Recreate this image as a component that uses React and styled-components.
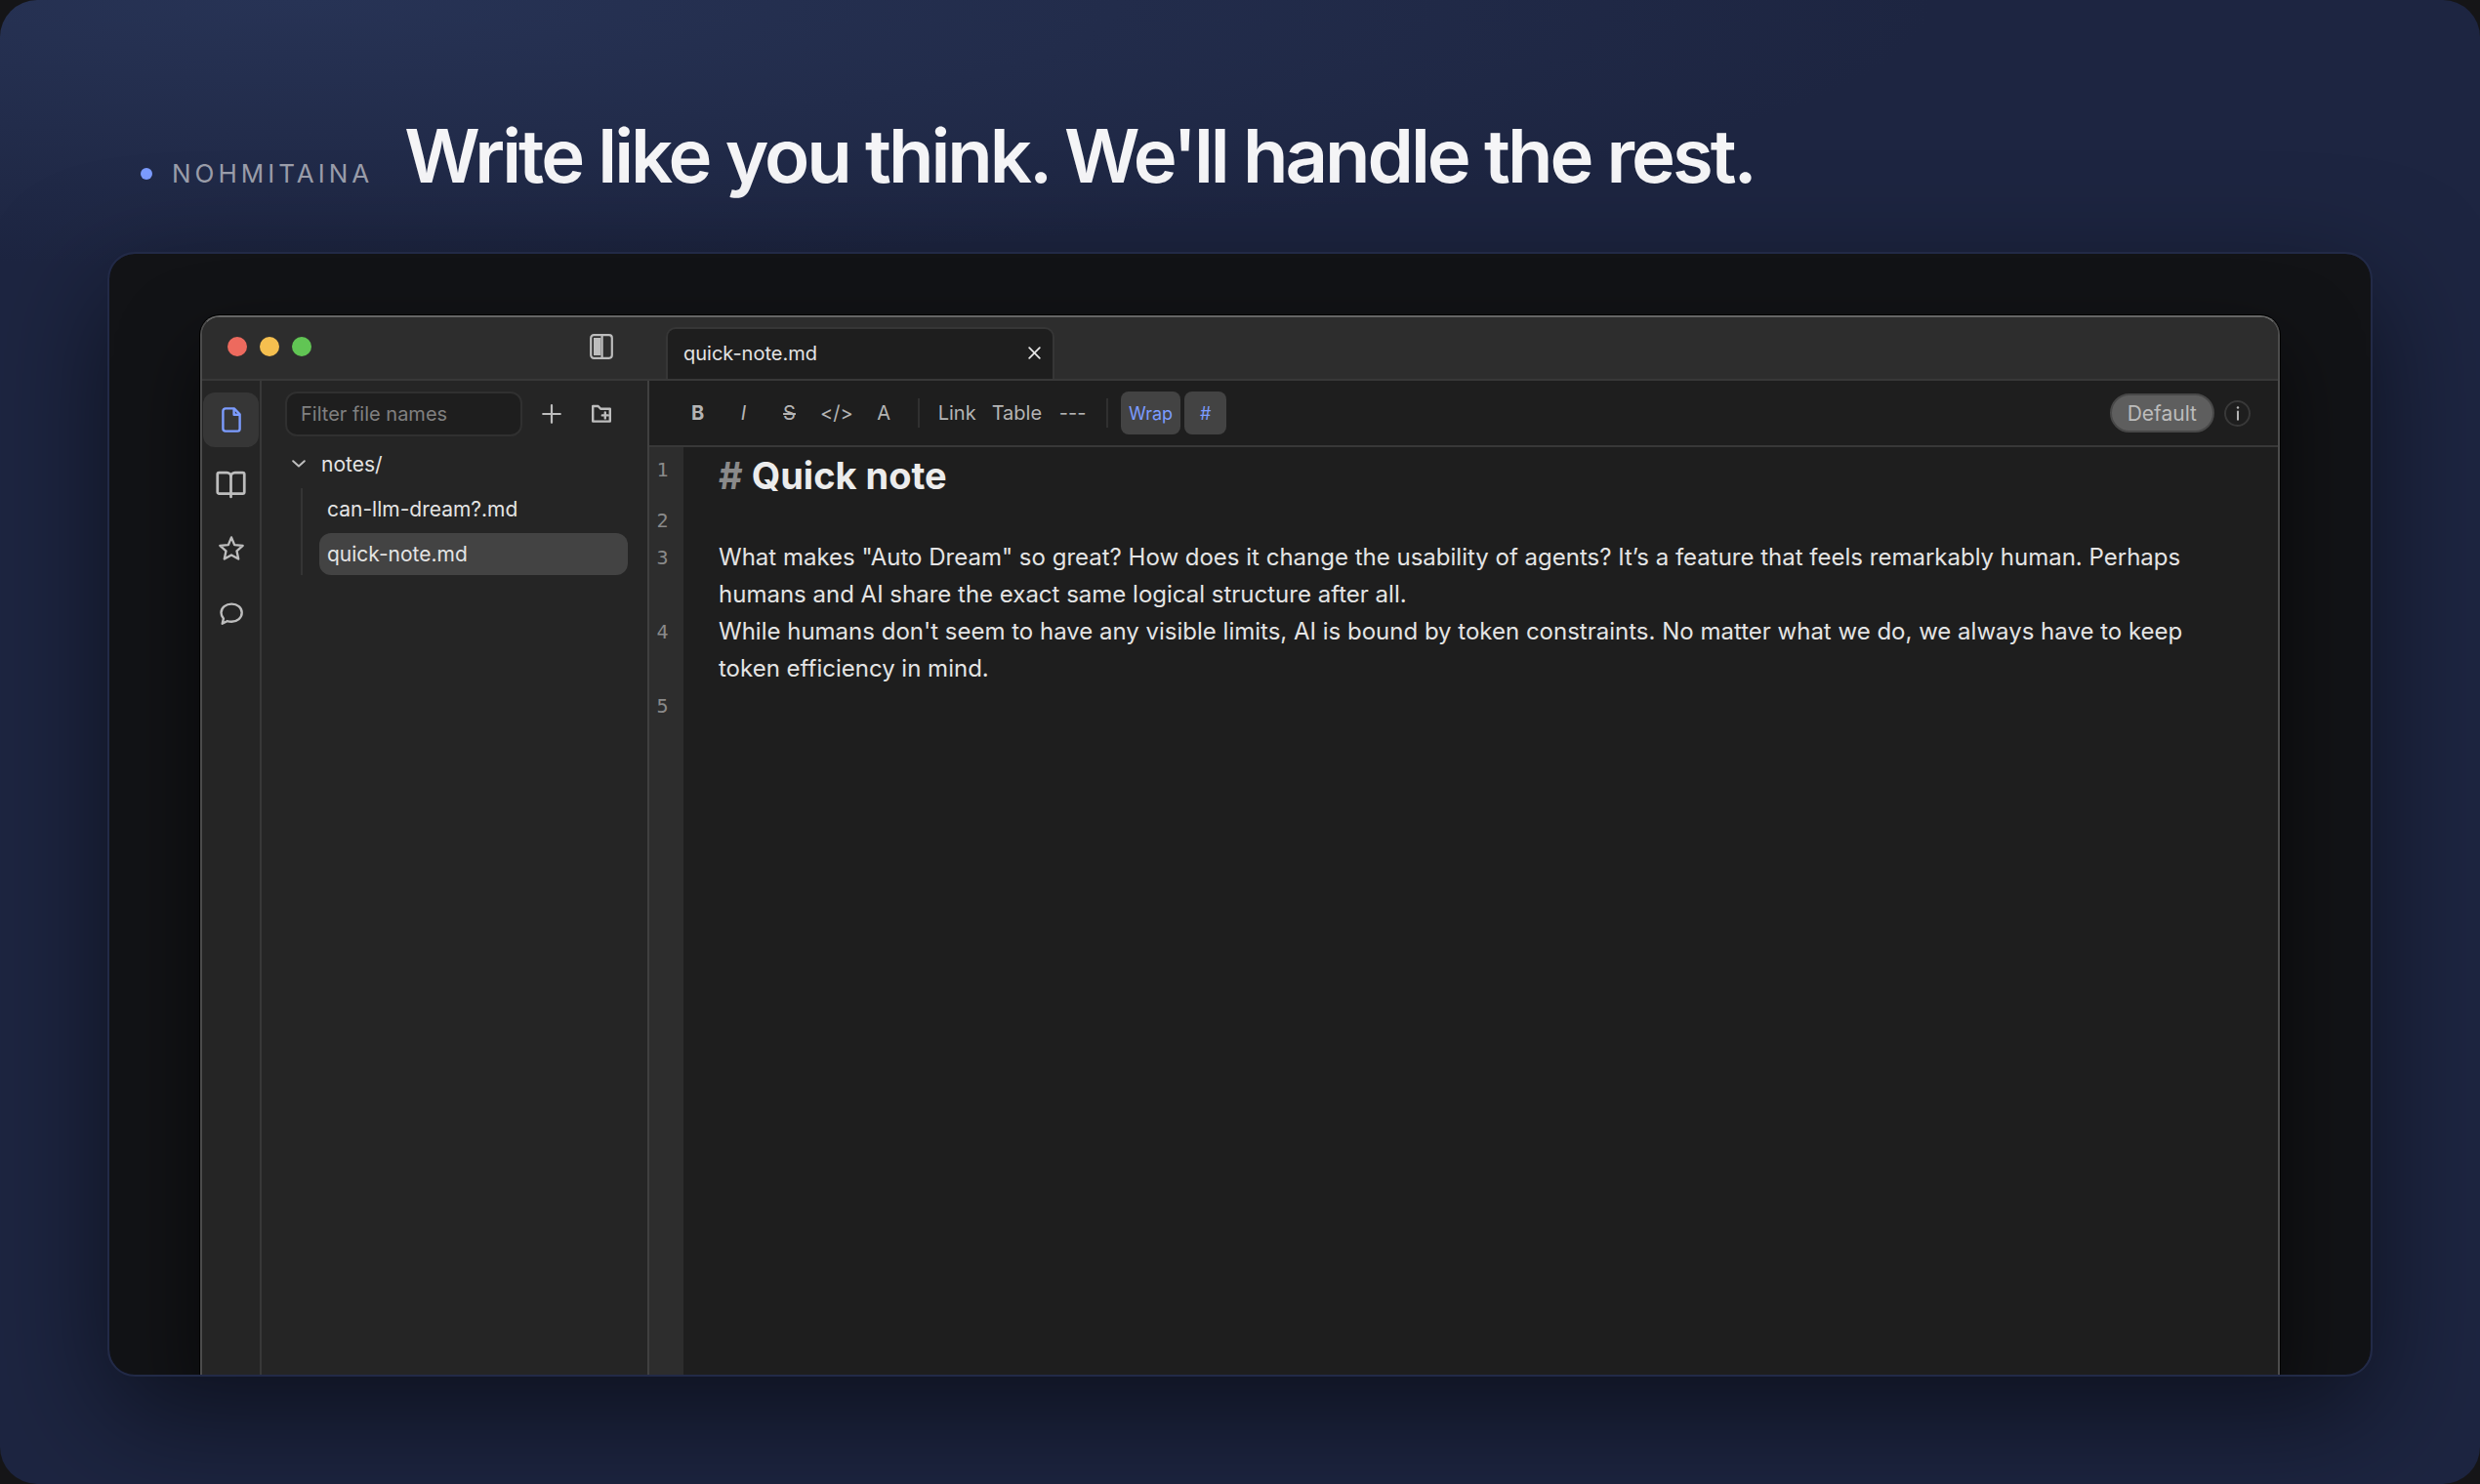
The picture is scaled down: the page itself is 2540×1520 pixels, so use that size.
import React, { useState } from "react";
import styled, { createGlobalStyle } from "styled-components";

const GlobalStyle = createGlobalStyle`
  * {
    box-sizing: border-box;
  }
  body {
    margin: 0;
    background: #151517;
    font-family: Inter, "Liberation Sans", sans-serif;
  }
  button, input {
    font-family: inherit;
    color: inherit;
  }
  h1, h2, p, ul {
    margin: 0;
    padding: 0;
  }
`;

const stroke = {
  fill: "none",
  stroke: "currentColor",
  strokeLinecap: "round",
  strokeLinejoin: "round",
};

const FileIcon = () => (
  <svg width="20" height="26" viewBox="0 0 20 26" {...stroke} strokeWidth="2.4">
    <path d="M4 1.4h8.800L18.600 7.400v14.800a2.400 2.400 0 0 1-2.400 2.400H4a2.600 2.600 0 0 1-2.600-2.600V4A2.600 2.600 0 0 1 4 1.400z" />
    <path d="M12.600 2.200v5.600h5.400" />
  </svg>
);

const BookIcon = () => (
  <svg width="33" height="33" viewBox="0 0 24 24" {...stroke} strokeWidth="2">
    <path d="M12 6.500v14.500" />
    <path d="M12 18.600H3.200a1.200 1.200 0 0 1-1.200-1.200V4.200A1.200 1.200 0 0 1 3.200 3H9a3 3 0 0 1 3 3 3 3 0 0 1 3-3h5.800A1.200 1.200 0 0 1 22 4.200v13.200a1.200 1.200 0 0 1-1.200 1.200z" />
  </svg>
);

const StarIcon = () => (
  <svg width="28" height="28" viewBox="0 0 24 24" {...stroke} strokeWidth="2">
    <path d="M12 2l2.700 6.700L22 9.270l-5.300 4.670 1.480 7.080L12 17.500l-6.180 3.520 1.480-7.080L2 9.270l7.300-.570z" />
  </svg>
);

const ChatIcon = () => (
  <svg width="26" height="26" viewBox="0 0 26 26" {...stroke} strokeWidth="2.4">
    <path d="M13.200 3.600C7.200 3.600 2.500 7.400 2.500 12.600c0 2.300.9 4.300 2.400 6L3.700 23.800l4.900-2.600c1.400.4 3 .6 4.600.6 6 0 10.500-4 10.500-9.200s-4.500-9-10.500-9z" />
  </svg>
);

const PlusIcon = () => (
  <svg width="20" height="20" viewBox="0 0 20 20" {...stroke} strokeWidth="2.2">
    <path d="M10 1.200v17.600M1.200 10h17.600" />
  </svg>
);

const FolderPlusIcon = () => (
  <svg width="22" height="20" viewBox="0 0 22 20" {...stroke} strokeWidth="2.4">
    <path d="M2.200 2h5.400l2.600 2.800h9.600v12.800H2.200z" />
    <path d="M14.800 8.400v6M11.800 11.400h6" />
  </svg>
);

const ChevronIcon = () => (
  <svg width="14" height="8" viewBox="0 0 14 8" {...stroke} strokeWidth="2">
    <path d="M1.200 1.200L7 6.600l5.800-5.400" />
  </svg>
);

const PanelIcon = () => (
  <svg width="24" height="26" viewBox="0 0 24 26" {...stroke} strokeWidth="2.2">
    <rect x="1.200" y="1.200" width="21.600" height="23.600" rx="3" />
    <path d="M12.600 2v22" />
    <rect x="4" y="4" width="7.400" height="18" fill="currentColor" stroke="none" />
  </svg>
);

const CloseIcon = () => (
  <svg width="13" height="13" viewBox="0 0 13 13" {...stroke} strokeWidth="1.8">
    <path d="M1.200 1.200l10.600 10.600M11.800 1.200L1.200 11.800" />
  </svg>
);

const InfoIcon = () => (
  <svg width="4" height="15" viewBox="0 0 4 15" {...stroke} strokeWidth="2">
    <path d="M2 5.400v8.400" />
    <path d="M2 1.400v.1" strokeWidth="2.4" />
  </svg>
);

const railItems = [
  { label: "Files", icon: <FileIcon /> },
  { label: "Library", icon: <BookIcon /> },
  { label: "Favorites", icon: <StarIcon /> },
  { label: "Chat", icon: <ChatIcon /> },
];

const files = ["can-llm-dream?.md", "quick-note.md"];

const App = () => {
  const [rail, setRail] = useState("Files");
  const [file, setFile] = useState("quick-note.md");

  return (
    <Page>
      <GlobalStyle />
      <Hero>
        <Brand>
          <Dot />
          <span>NOHMITAINA</span>
        </Brand>
        <Slogan>Write like you think. We'll handle the rest.</Slogan>
      </Hero>
      <Stage>
        <AppWindow>
          <TitleBar>
            <TitleLeft>
              <Light $color="#ed6a5e" />
              <Light $color="#f5bf4f" />
              <Light $color="#61c554" />
              <PanelButton aria-label="Toggle sidebar">
                <PanelIcon />
              </PanelButton>
            </TitleLeft>
            <Tab>
              <span>{file}</span>
              <TabClose aria-label="Close tab">
                <CloseIcon />
              </TabClose>
            </Tab>
          </TitleBar>
          <Body>
            <Rail>
              {railItems.map((item) => (
                <RailButton
                  key={item.label}
                  aria-label={item.label}
                  $active={rail === item.label}
                  onClick={() => setRail(item.label)}
                >
                  {item.icon}
                </RailButton>
              ))}
            </Rail>
            <Sidebar>
              <SearchRow>
                <FilterInput aria-label="Filter file names" placeholder="Filter file names" />
                <IconButton aria-label="New file">
                  <PlusIcon />
                </IconButton>
                <IconButton aria-label="New folder">
                  <FolderPlusIcon />
                </IconButton>
              </SearchRow>
              <FolderRow>
                <ChevronIcon />
                <FolderName>notes/</FolderName>
              </FolderRow>
              <FileList>
                {files.map((name) => (
                  <li key={name}>
                    <FileRow $active={file === name} onClick={() => setFile(name)}>
                      {name}
                    </FileRow>
                  </li>
                ))}
              </FileList>
            </Sidebar>
            <Main>
              <Toolbar>
                <Tool $weight={700}>B</Tool>
                <Tool $italic>I</Tool>
                <Tool $strike>S</Tool>
                <Tool>&lt;/&gt;</Tool>
                <Tool>A</Tool>
                <Divider />
                <Tool>Link</Tool>
                <Tool>Table</Tool>
                <Tool>---</Tool>
                <Divider />
                <ToggleTool aria-pressed="true">Wrap</ToggleTool>
                <ToggleTool aria-pressed="true">#</ToggleTool>
                <ThemeButton>Default</ThemeButton>
                <InfoButton aria-label="Info">
                  <InfoIcon />
                </InfoButton>
              </Toolbar>
              <Editor>
                <Line>
                  <LineNo>1</LineNo>
                  <NoteTitle>
                    <Mark>#</Mark> Quick note
                  </NoteTitle>
                </Line>
                <Line>
                  <LineNo>2</LineNo>
                </Line>
                <Line>
                  <LineNo>3</LineNo>
                  <Paragraph>
                    What makes "Auto Dream" so great? How does it change the usability of
                    agents? It’s a feature that feels remarkably human. Perhaps humans and
                    AI share the exact same logical structure after all.
                  </Paragraph>
                </Line>
                <Line>
                  <LineNo>4</LineNo>
                  <Paragraph>
                    While humans don't seem to have any visible limits, AI is bound by token
                    constraints. No matter what we do, we always have to keep token
                    efficiency in mind.
                  </Paragraph>
                </Line>
                <Line>
                  <LineNo>5</LineNo>
                </Line>
              </Editor>
            </Main>
          </Body>
        </AppWindow>
      </Stage>
    </Page>
  );
};
export default App;

const Page = styled.div`
  min-height: 100vh;
  display: flex;
  flex-direction: column;
  padding: 119px 110px 110px;
  border-radius: 38px;
  background: radial-gradient(ellipse 66% 18% at 12% 0%, #273355 0%, rgba(39, 51, 85, 0) 100%), #1d2541;
  overflow: hidden;
`;

const Hero = styled.header`
  display: flex;
  align-items: baseline;
  gap: 32px;
  padding: 0 34px 59px;
`;
const Brand = styled.div`
  display: flex;
  align-items: baseline;
  gap: 20px;
  font-size: 26px;
  letter-spacing: 4px;
  color: #9b9eab;
`;
const Dot = styled.span`
  width: 12px;
  height: 12px;
  align-self: center;
  border-radius: 50%;
  background: #7c9cff;
`;
const Slogan = styled.h1`
  font-size: 76px;
  line-height: 80px;
  font-weight: 600;
  letter-spacing: -3px;
  color: #f5f5f7;
`;

const Stage = styled.main`
  flex: 1;
  display: flex;
  padding: 63px 93px 0;
  border: 2px solid #222a47;
  border-radius: 28px;
  background: #121316;
  background-clip: padding-box;
  box-shadow: 0 40px 120px rgba(0, 0, 0, 0.55);
  overflow: hidden;
`;
const AppWindow = styled.div`
  flex: 1;
  display: flex;
  flex-direction: column;
  border: 2px solid #4c4c4c;
  border-top-color: #666;
  border-bottom: 0;
  border-radius: 20px 20px 0 0;
  background: #1e1e1e;
  box-shadow: 0 0 0 1px #000, 0 36px 80px rgba(0, 0, 0, 0.6);
  overflow: hidden;
`;

const TitleBar = styled.div`
  height: 65px;
  display: flex;
  align-items: flex-end;
  border-bottom: 2px solid #383838;
  background: #2d2d2d;
`;
const TitleLeft = styled.div`
  width: 475px;
  height: 60px;
  align-self: flex-start;
  display: flex;
  align-items: center;
  gap: 13px;
  padding: 0 45px 0 26px;
`;
const Light = styled.span`
  width: 20px;
  height: 20px;
  border-radius: 50%;
  background: ${(props) => props.$color};
`;
const IconButton = styled.button`
  width: 42px;
  height: 42px;
  flex: none;
  display: flex;
  align-items: center;
  justify-content: center;
  padding: 0;
  border: 0;
  background: none;
  color: #bdbdbd;
`;
const PanelButton = styled(IconButton)`
  margin-left: auto;
`;
const Tab = styled.div`
  width: 398px;
  height: 53px;
  display: flex;
  align-items: center;
  justify-content: space-between;
  padding: 0 10px 2px 16px;
  border: 2px solid #363636;
  border-bottom: 0;
  border-radius: 10px 10px 0 0;
  background: #1e1e1e;
  color: #e4e4e4;
  font-size: 20px;
`;
const TabClose = styled.button`
  display: flex;
  padding: 2px;
  border: 0;
  background: none;
`;

const Body = styled.div`
  flex: 1;
  display: flex;
`;
const Rail = styled.nav`
  width: 61px;
  display: flex;
  flex-direction: column;
  align-items: center;
  gap: 10px;
  padding-top: 12px;
  border-right: 2px solid #383838;
  background: #252525;
`;
const RailButton = styled.button`
  width: 57px;
  height: 56px;
  display: flex;
  align-items: center;
  justify-content: center;
  padding: 0;
  border: 0;
  border-radius: 12px;
  background: ${(props) => (props.$active ? "#363636" : "none")};
  color: ${(props) => (props.$active ? "#7c9cff" : "#bdbdbd")};
`;

const Sidebar = styled.aside`
  width: 397px;
  display: flex;
  flex-direction: column;
  padding: 11px 20px 0 24px;
  border-right: 2px solid #404040;
  background: #252525;
  color: #e4e4e4;
`;
const SearchRow = styled.div`
  display: flex;
  align-items: center;
  gap: 9px;
  padding-right: 6px;
  margin-bottom: 6px;
`;
const FilterInput = styled.input`
  flex: 1;
  min-width: 0;
  height: 46px;
  padding: 0 14px;
  border: 2px solid #303030;
  border-radius: 12px;
  background: #1e1e1e;
  font-size: 20px;
  &::placeholder {
    color: #808080;
  }
`;
const FolderRow = styled.button`
  height: 44px;
  display: flex;
  align-items: center;
  gap: 16px;
  padding: 0 0 0 7px;
  margin-bottom: 3px;
  border: 0;
  background: none;
  color: #bdbdbd;
  font-size: 21px;
`;
const FolderName = styled.span`
  color: #e4e4e4;
`;
const FileList = styled.ul`
  display: flex;
  flex-direction: column;
  gap: 3px;
  margin-left: 16px;
  padding-left: 17px;
  border-left: 2px solid #343434;
  list-style-type: none;
`;
const FileRow = styled.button`
  width: 100%;
  height: 43px;
  display: block;
  padding: 0 8px;
  border: 0;
  border-radius: 12px;
  background: ${(props) => (props.$active ? "#434343" : "none")};
  font-size: 21px;
  text-align: left;
`;

const Main = styled.section`
  flex: 1;
  min-width: 0;
  display: flex;
  flex-direction: column;
`;
const Toolbar = styled.div`
  height: 68px;
  display: flex;
  align-items: center;
  gap: 4px;
  padding: 0 28px;
  border-bottom: 2px solid #383838;
  background: #1e1e1e;
`;
const Tool = styled.button`
  min-width: 43px;
  height: 44px;
  padding: 0 6px;
  border: 0;
  border-radius: 8px;
  background: none;
  color: #b4b4b4;
  font-size: 20px;
  font-weight: ${(props) => props.$weight || 400};
  font-style: ${(props) => (props.$italic ? "italic" : "normal")};
  text-decoration: ${(props) => (props.$strike ? "line-through" : "none")};
`;
const ToggleTool = styled(Tool)`
  padding: 0 8px;
  background: #434343;
  color: #7c9cff;
  font-size: 18px;
`;
const Divider = styled.span`
  width: 2px;
  height: 30px;
  margin: 0 9px;
  background: #303030;
`;
const ThemeButton = styled.button`
  height: 40px;
  margin-left: auto;
  padding: 0 16px;
  border: 2px solid #484848;
  border-radius: 20px;
  background: #5e5e5e;
  color: #bcbcbc;
  font-size: 21px;
`;
const InfoButton = styled.button`
  width: 27px;
  height: 27px;
  display: flex;
  align-items: center;
  justify-content: center;
  margin-left: 6px;
  padding: 0;
  border: 2px solid #383838;
  border-radius: 50%;
  background: none;
  color: #b4b4b4;
`;

const Editor = styled.div`
  flex: 1;
  padding-top: 4px;
  background: linear-gradient(90deg, #2d2d2d 35px, #1e1e1e 35px);
  color: #e4e4e4;
  font-size: 24px;
  line-height: 38px;
`;
const Line = styled.div`
  display: flex;
  min-height: 38px;
`;
const LineNo = styled.span`
  width: 35px;
  flex: none;
  margin-right: 36px;
  padding-right: 8px;
  color: #8a8a8a;
  font-family: "DejaVu Sans Mono", monospace;
  font-size: 20px;
  text-align: center;
`;
const NoteTitle = styled.h2`
  font-size: 38px;
  line-height: 51px;
  padding-bottom: 1px;
  font-weight: 700;
  color: #ececec;
`;
const Mark = styled.span`
  color: #8a8a8a;
`;
const Paragraph = styled.p`
  flex: 1;
  padding-right: 36px;
`;
